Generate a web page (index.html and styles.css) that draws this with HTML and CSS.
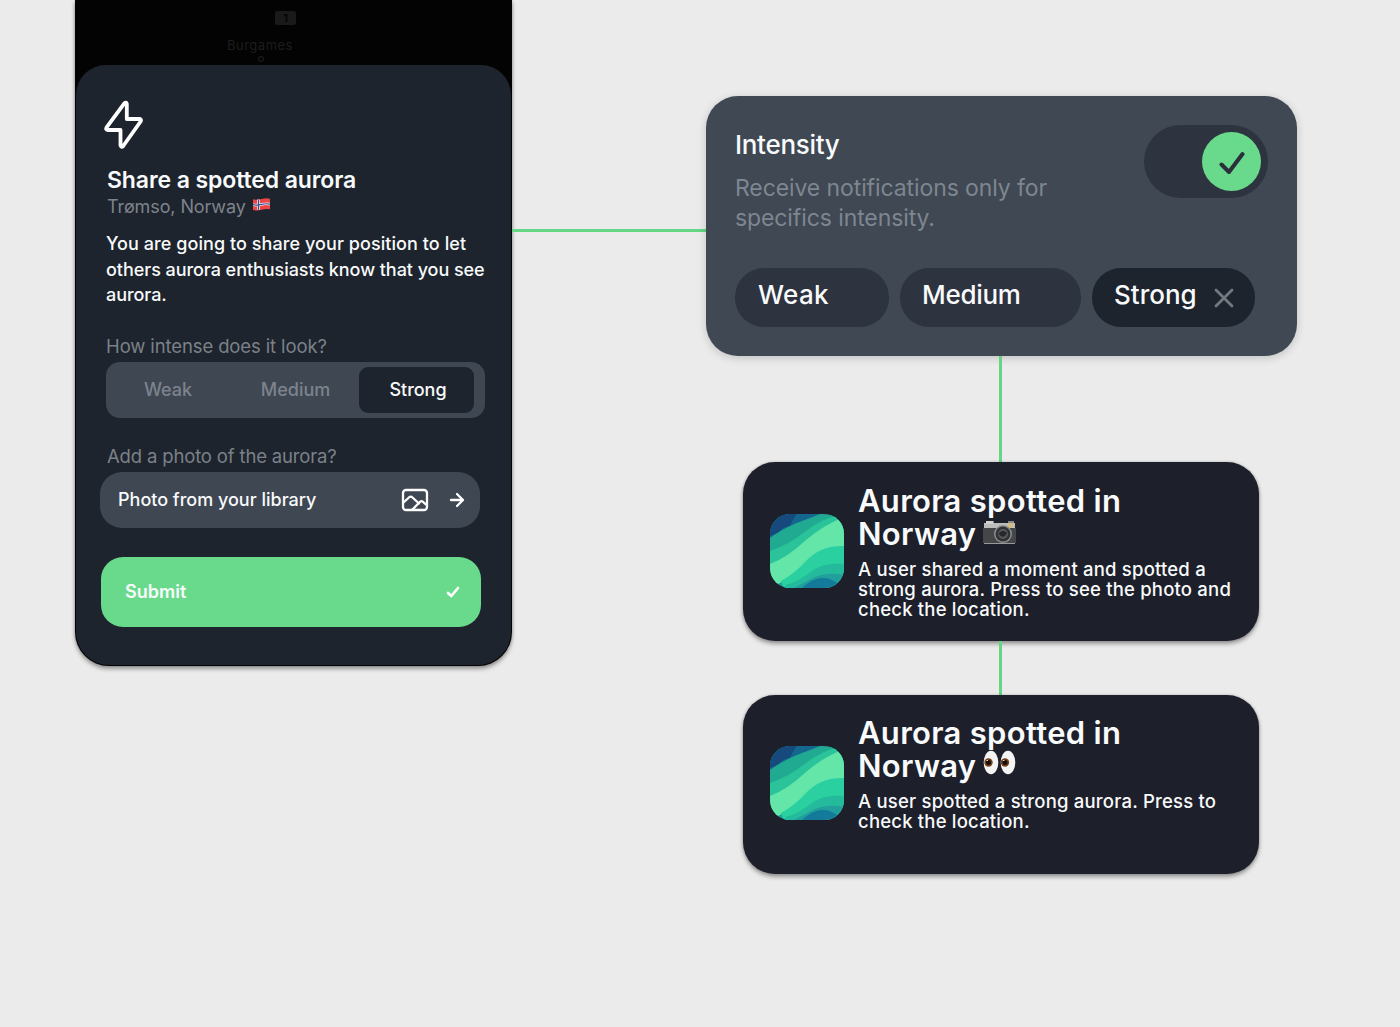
FILE: index.html
```html
<!DOCTYPE html>
<html lang="en">
<head>
    <meta charset="UTF-8">
    <meta name="viewport" content="width=device-width, initial-scale=1.0">
    <title>Aurora sharing flow</title>
    <link rel="stylesheet" href="styles.css">
</head>
<body>
    <!-- shared shapes -->
    <svg class="defs" width="0" height="0">
        <symbol id="aurora" viewBox="0 0 74 74">
            <rect width="74" height="74" fill="#20a596"/>
            <path d="M0 0H50L25 10 0 26Z" fill="#14688f"/>
            <path d="M0 0H27Q23 4 20 12Q12 13 8 19L0 22Z" fill="#164a7c"/>
            <path d="M0 24Q24 6 60 0H74V14L0 52Z" fill="#20aa92"/>
            <path d="M0 37Q20 30 36 17T74 0V16L0 56Z" fill="#2bc399"/>
            <path d="M0 50Q18 43 36 26Q52 12 74 3V36L0 74Z" fill="#63e6a8"/>
            <path d="M11 67Q24 60 36 47Q51 31 74 32V74H14Z" fill="#2bd0a0"/>
            <path d="M15 71Q29 68 43 56Q57 48 74 50V74H15Z" fill="#23bb9c"/>
            <path d="M24 74Q31 70 39 66Q54 57 74 61V74Z" fill="#219f9c"/>
            <path d="M32 74Q50 57 67 69L72 74Z" fill="#137a9b"/>
        </symbol>
    </svg>

    <main class="board">
        <section class="phone">
            <div class="map">
                <span class="map-badge">1</span>
                <span class="map-label">Burgames</span>
                <span class="map-dot"></span>
            </div>
            <div class="sheet">
                <svg class="bolt" viewBox="0 0 40 50">
                    <path d="M20.5 3.2 2.6 27.4Q1.3 29.8 3.8 30H16.5V45.5Q17.3 47.8 19.2 46L36.6 21.5Q37.8 19.3 35.4 19H22.8V3.7Q22.2 1.7 20.5 3.2Z"/>
                </svg>
                <h1>Share a spotted aurora</h1>
                <p class="place">
                    <span>Trømso, Norway</span>
                    <svg class="flag" viewBox="0 0 17 13">
                        <path d="M0 1.2Q4 2.2 8.5 1T17 .8V11.2Q13 10.5 8.5 11.8T0 12Z" fill="#ed4545"/>
                        <path d="M5.5 1.5V12M0 6.7Q4 7.5 8.5 6.4T17 6.1" fill="none" stroke="#f5e9ef" stroke-width="2.7"/>
                        <path d="M5.5 1.5V12M0 6.7Q4 7.5 8.5 6.4T17 6.1" fill="none" stroke="#394d8b" stroke-width="1.2"/>
                    </svg>
                </p>
                <p class="intro"><span class="intro-first">You are going to share your position to let</span><br>others aurora enthusiasts know that you see<br>aurora.</p>

                <h2 class="label-intensity">How intense does it look?</h2>
                <div class="segments">
                    <button class="segment">Weak</button>
                    <button class="segment segment-medium">Medium</button>
                    <button class="segment active">Strong</button>
                </div>

                <h2 class="label-photo">Add a photo of the aurora?</h2>
                <button class="library">
                    <span>Photo from your library</span>
                    <svg class="picture" viewBox="0 0 28 24">
                        <rect x="2" y="2" width="24" height="20" rx="3"/>
                        <path d="M2.5 14.5 8.5 9Q10 8 11.5 9.5L18 15.5M11.5 21.5 19 13.8Q20.5 12.5 22 13.8L25.5 17"/>
                    </svg>
                    <svg class="arrow" viewBox="0 0 16 16">
                        <path d="M2 8H14M8 2 14 8 8 14"/>
                    </svg>
                </button>
                <button class="submit">
                    <span>Submit</span>
                    <svg class="tick" viewBox="0 0 14 12">
                        <path d="M2 7 5.3 10 12 2"/>
                    </svg>
                </button>
            </div>
        </section>

        <div class="link-across"></div>

        <section class="flow">
            <div class="settings">
                <div class="settings-top">
                    <div>
                        <h3>Intensity</h3>
                        <p class="hint">Receive notifications only for<br>specifics intensity.</p>
                    </div>
                    <div class="switch">
                        <div class="knob">
                            <svg viewBox="0 0 26 24">
                                <path d="M2.5 13.5 10 21 23.5 3"/>
                            </svg>
                        </div>
                    </div>
                </div>
                <div class="chips">
                    <span class="chip chip-weak">Weak</span>
                    <span class="chip chip-medium">Medium</span>
                    <span class="chip chip-strong">Strong
                        <svg viewBox="0 0 20 20"><path d="M2 2 18 18M18 2 2 18"/></svg>
                    </span>
                </div>
            </div>

            <div class="link-down"></div>

            <article class="notice">
                <svg class="app-icon"><use href="#aurora"/></svg>
                <div>
                    <h4>Aurora spotted in<br>Norway
                        <svg class="camera" viewBox="0 0 33 25">
                            <path d="M3 1H11V4H25V1H31V24H1V4H3Z" fill="#888a8b"/>
                            <path d="M1 3H32V8H1Z" fill="#bbbcbb"/>
                            <rect y="8" width="33" height="15" fill="#444648"/>
                            <path d="M1 23.5H32" stroke="#989998"/>
                            <path d="M3 1H10V4H3Z" fill="#d1d2cd"/>
                            <rect x="25" y="3" width="5" height="5" fill="#d4bd82"/>
                            <circle cx="20" cy="14" r="9" fill="#8b8d8e"/>
                            <circle cx="20" cy="14" r="7.5" fill="#303234"/>
                            <circle cx="20" cy="14" r="5" fill="#55585b"/>
                            <path d="M16 13Q20 9 24 13L22 16Q18 18 16 14Z" fill="#25272a"/>
                        </svg>
                    </h4>
                    <p>A user shared a moment and spotted a<br>strong aurora. Press to see the photo and<br>check the location.</p>
                </div>
            </article>

            <div class="link-down short"></div>

            <article class="notice notice-plain">
                <svg class="app-icon"><use href="#aurora"/></svg>
                <div>
                    <h4>Aurora spotted in<br>Norway
                        <svg class="eyes" viewBox="0 0 33 25">
                            <ellipse cx="8" cy="12.5" rx="7.3" ry="11.8" fill="#f5f4f4"/>
                            <ellipse cx="25" cy="12.5" rx="7.3" ry="11.8" fill="#f5f4f4"/>
                            <circle cx="5.5" cy="12.5" r="4.2" fill="#754119"/>
                            <circle cx="22" cy="12.5" r="4.2" fill="#754119"/>
                            <circle cx="5.5" cy="12.5" r="2.5" fill="#160f0c"/>
                            <circle cx="22" cy="12.5" r="2.5" fill="#160f0c"/>
                            <path d="M3.5 10.5H5M20 10.5H21.5" stroke="#e9d9c6"/>
                        </svg>
                    </h4>
                    <p>A user spotted a strong aurora. Press to<br>check the location.</p>
                </div>
            </article>
        </section>
    </main>
</body>
</html>
```

FILE: styles.css
```css
* {
    margin: 0;
    padding: 0;
    box-sizing: border-box;
}

body {
    font-family: Inter, "Liberation Sans", sans-serif;
    font-weight: 500;
    background: #ebebeb;
    color: #f8fafb;
    white-space: nowrap;
}

button {
    border: none;
    font: inherit;
    color: inherit;
}

svg {
    flex-shrink: 0;
}

.defs {
    display: block;
}

.board {
    display: flex;
    align-items: flex-start;
    height: 1027px;
    padding-left: 75px;
    overflow: hidden;
}

/* phone */
.phone {
    width: 437px;
    height: 666px;
    background: #030303;
    border-radius: 0 0 34px 34px;
    box-shadow: 0 3px 4px rgba(0,0,0,0.35), 0 0 3px rgba(0,0,0,0.2);
}

.map {
    display: flex;
    flex-direction: column;
    height: 65px;
    padding-top: 11px;
    color: #1d1d1d;
    font-size: 13px;
    font-weight: 400;
}

.map-badge {
    width: 21px;
    height: 14px;
    margin-left: 200px;
    border-radius: 2px;
    background: #1a1a1a;
    color: #050505;
    font-size: 11px;
    font-weight: 700;
    line-height: 14px;
    text-align: center;
}

.map-label {
    margin: 12px 0 0 152px;
    letter-spacing: 0.5px;
    line-height: 16px;
}

.map-dot {
    width: 6px;
    height: 6px;
    margin: 3px 0 0 183px;
    border: 1px solid #222;
    border-radius: 50%;
}

.sheet {
    height: 600px;
    margin: 0 1px;
    padding: 35px 0 0 30px;
    background: #1e242d;
    border-radius: 30px 30px 33px 33px;
}

.bolt {
    display: block;
    width: 40px;
    height: 50px;
    margin-left: -2px;
    fill: none;
    stroke: #fff;
    stroke-width: 3.8;
    stroke-linejoin: round;
}

h1 {
    margin-top: 16px;
    padding-left: 1px;
    font-size: 23px;
    font-weight: 600;
    line-height: 28px;
    letter-spacing: -0.1px;
}

.place {
    display: flex;
    align-items: center;
    gap: 7px;
    height: 24px;
    padding-left: 1px;
    color: #7d838a;
    font-size: 18px;
    font-weight: 400;
    letter-spacing: -0.1px;
}

.flag {
    width: 17px;
    height: 13px;
    margin-top: -4px;
}

.intro {
    margin-top: 13px;
    font-size: 18px;
    line-height: 25.7px;
    letter-spacing: -0.05px;
}

.intro-first {
    letter-spacing: 0.07px;
}

h2 {
    color: #7b8188;
    font-size: 18.5px;
    font-weight: 400;
    line-height: 24px;
    letter-spacing: -0.12px;
}

.label-intensity {
    margin-top: 26px;
}

.segments {
    display: flex;
    width: 379px;
    height: 56px;
    margin-top: 4px;
    padding: 5px 11px 5px 10px;
    background: #3f4753;
    border-radius: 14px;
}

.segment {
    width: 104px;
    padding-bottom: 2px;
    background: none;
    color: #7d838c;
    font-size: 18px;
}

.segment-medium {
    flex: 1;
    padding-left: 12px;
}

.segment.active {
    width: 115px;
    padding-left: 3px;
    background: #1e242d;
    border-radius: 9px;
    color: #f8fafb;
}

.label-photo {
    margin-top: 26px;
    padding-left: 1px;
    letter-spacing: -0.16px;
}

.library,
.submit {
    display: flex;
    align-items: center;
    width: 380px;
    font-size: 18px;
}

.library {
    height: 56px;
    margin: 4px 0 0 -6px;
    padding: 0 15px 1px 18px;
    background: #3f4753;
    border-radius: 22px;
}

.picture,
.arrow,
.tick {
    fill: none;
    stroke: #fff;
    stroke-width: 2.3;
    stroke-linecap: round;
    stroke-linejoin: round;
}

.picture {
    width: 28px;
    height: 24px;
    margin-left: auto;
}

.arrow {
    width: 16px;
    height: 16px;
    margin-left: 20px;
}

.submit {
    justify-content: space-between;
    height: 70px;
    margin: 29px 0 0 -5px;
    padding: 0 21px 1px 24px;
    background: #69da8b;
    border-radius: 22px;
    font-weight: 600;
}

.tick {
    width: 14px;
    height: 12px;
    stroke-width: 2.7;
}

/* connectors */
.link-across {
    width: 194px;
    height: 3px;
    margin-top: 229px;
    background: #64d684;
}

.link-down {
    width: 3px;
    height: 106px;
    margin-left: 293px;
    background: #64d684;
}

.link-down.short {
    height: 54px;
}

/* right column */
.flow {
    width: 591px;
    padding-top: 96px;
}

.settings {
    height: 260px;
    padding: 29px 29px 0 29px;
    background: #3f4853;
    border-radius: 32px;
    box-shadow: 0 2px 8px rgba(0,0,0,0.18);
}

.settings-top {
    display: flex;
    justify-content: space-between;
    height: 143px;
}

h3 {
    font-size: 26px;
    font-weight: 500;
    line-height: 40px;
    letter-spacing: -0.3px;
}

.hint {
    margin-top: 8px;
    color: #7e8690;
    font-size: 23px;
    font-weight: 400;
    line-height: 30px;
    letter-spacing: -0.1px;
}

.switch {
    width: 124px;
    height: 73px;
    padding: 7px 7px 0 58px;
    background: #2d333f;
    border-radius: 37px;
}

.knob {
    display: flex;
    align-items: center;
    justify-content: center;
    width: 59px;
    height: 59px;
    background: #69da8b;
    border-radius: 50%;
}

.knob svg {
    width: 26px;
    height: 24px;
    margin-top: 3px;
    fill: none;
    stroke: #29303b;
    stroke-width: 4;
    stroke-linecap: round;
    stroke-linejoin: round;
}

.chips {
    display: flex;
    gap: 11px;
}

.chip {
    display: flex;
    height: 59px;
    padding-left: 22px;
    background: #2d333f;
    border-radius: 29px;
    font-size: 26px;
    line-height: 54px;
}

.chip-weak {
    width: 154px;
    padding-left: 23px;
    letter-spacing: 0.3px;
}

.chip-medium {
    width: 181px;
    letter-spacing: -0.3px;
}

.chip-strong {
    justify-content: space-between;
    width: 163px;
    padding-right: 21px;
    background: #1d242d;
}

.chip svg {
    width: 20px;
    height: 20px;
    margin-top: 20px;
    fill: none;
    stroke: #737981;
    stroke-width: 2.8;
    stroke-linecap: round;
}

.notice {
    display: flex;
    gap: 14px;
    width: 516px;
    height: 179px;
    margin-left: 37px;
    padding: 22px 0 0 27px;
    background: #1d1f2a;
    border-radius: 32px;
    box-shadow: 0 3px 4px rgba(0,0,0,0.35), 0 0 3px rgba(0,0,0,0.2);
}

.notice-plain {
    padding-top: 21px;
}

.app-icon {
    width: 74px;
    height: 74px;
    margin-top: 30px;
    border-radius: 20px;
}

h4 {
    font-size: 31px;
    font-weight: 600;
    line-height: 33px;
    letter-spacing: 0.3px;
}

.camera,
.eyes {
    width: 33px;
    height: 25px;
    margin-left: -1px;
}

.eyes {
    margin-bottom: 2px;
    vertical-align: baseline;
}

.notice p {
    margin-top: 9px;
    font-size: 18.5px;
    line-height: 20px;
    letter-spacing: 0.2px;
}
```
